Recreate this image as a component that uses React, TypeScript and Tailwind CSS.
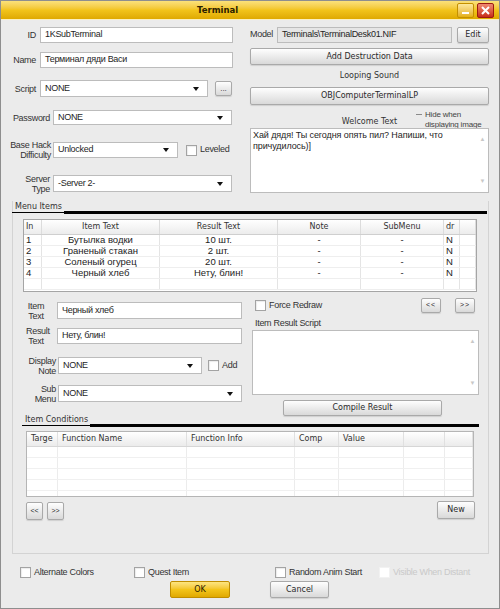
import React from "react";

const ui = "font-['Liberation_Sans',Arial,sans-serif]";
const dv = "font-['DejaVu_Sans',Verdana,sans-serif]";
const txt = "text-[9px] tracking-[-0.3px]";

type Kids = { className?: string; children?: React.ReactNode };

const Arrow = () => (
    <span className="ml-auto mr-[4px] h-0 w-0 shrink-0 border-x-[3px] border-t-[4px] border-x-transparent border-t-[#111]" />
);

function Field({ className = "", children, gray }: Kids & { gray?: boolean }) {
    return (
        <div
            className={`flex shrink-0 items-center overflow-hidden whitespace-nowrap border border-[#bcbcbc] px-[4px] ${txt} text-[#1e1e1e] ${
                gray ? "bg-[#e6e6e6]" : "bg-white"
            } ${className}`}
        >
            {children}
        </div>
    );
}

function Combo({ className = "", children }: Kids) {
    return (
        <Field className={className}>
            <span>{children}</span>
            <Arrow />
        </Field>
    );
}

function Btn({ className = "", children }: Kids) {
    return (
        <div
            className={`flex shrink-0 items-center justify-center rounded-[2px] border border-[#a9a9a9] bg-linear-to-b from-[#fefefe] to-[#d9d9d9] text-[#2a2a2a] shadow-[0_1px_1px_rgba(0,0,0,0.12)] ${className}`}
        >
            {children}
        </div>
    );
}

function Check({ label, disabled, className = "" }: { label: string; disabled?: boolean; className?: string }) {
    return (
        <div className={`flex items-center gap-[3px] ${txt} ${disabled ? "text-[#c9c9c9]" : "text-[#333]"} ${className}`}>
            <span
                className={`h-[11px] w-[11px] shrink-0 border bg-white ${
                    disabled ? "border-[#f2f2f2]" : "border-[#a3a3a3] shadow-[inset_1px_1px_1px_rgba(0,0,0,0.08)]"
                }`}
            />
            {label}
        </div>
    );
}

function Lbl({ className = "", children }: Kids) {
    return <div className={`shrink-0 text-right ${txt} leading-[10px] text-[#333] ${className}`}>{children}</div>;
}

function Section({ title, className = "" }: { title: string; className?: string }) {
    return (
        <div className={`flex items-end ${className}`}>
            <span className={`border-b border-black pl-[3px] pr-[2px] text-[8px] leading-[11px] text-[#333] ${dv}`}>{title}</span>
            <div className="mb-[-1px] h-[3px] flex-1 bg-black" />
        </div>
    );
}

const menuCols = [
    { w: "w-[18px]", t: "In", a: "text-left pl-[2px]" },
    { w: "w-[118px]", t: "Item Text", a: "text-center" },
    { w: "w-[118px]", t: "Result Text", a: "text-center" },
    { w: "w-[83px]", t: "Note", a: "text-center" },
    { w: "w-[83px]", t: "SubMenu", a: "text-center" },
    { w: "w-[16px]", t: "dr", a: "text-left pl-[2px]" },
    { w: "flex-1", t: "", a: "" },
];

const menuRows = [
    ["1", "Бутылка водки", "10 шт.", "-", "-", "N", ""],
    ["2", "Граненый стакан", "2 шт.", "-", "-", "N", ""],
    ["3", "Соленый огурец", "20 шт.", "-", "-", "N", ""],
    ["4", "Черный хлеб", "Нету, блин!", "-", "-", "N", ""],
    ["", "", "", "", "", "", ""],
];

const condCols = [
    { w: "w-[31px]", t: "Targe" },
    { w: "w-[129px]", t: "Function Name" },
    { w: "w-[108px]", t: "Function Info" },
    { w: "w-[44px]", t: "Comp" },
    { w: "w-[65px]", t: "Value" },
    { w: "w-[41px]", t: "" },
    { w: "flex-1", t: "" },
];

const App: React.FC = () => {
    return (
        <div className={`flex h-[609px] w-[500px] flex-col overflow-hidden border border-[#8e8e8e] bg-[#ebebeb] ${ui}`}>
            {/* Title bar */}
            <div className="flex h-[19px] shrink-0 items-center border-b border-[#fbf0c0] bg-linear-to-b from-[#fbe17a] via-[#f2c41a] to-[#dfa900]">
                <span className={`ml-[196px] text-[8.5px] font-bold text-[#2a2000] ${dv}`}>Terminal</span>
                <div className="ml-auto mr-[5px] flex gap-[3px]">
                    <div className="flex h-[15px] w-[17px] items-end justify-center rounded-[2px] border border-[#c49000] bg-linear-to-b from-[#fde89a] to-[#e4b000] pb-[3px]">
                        <span className="h-[2px] w-[7px] bg-white" />
                    </div>
                    <div className="flex h-[15px] w-[17px] items-center justify-center rounded-[2px] border border-[#9c1a10] bg-linear-to-b from-[#f08a70] to-[#c72a18]">
                        <svg width="9" height="9" viewBox="0 0 9 9">
                            <path d="M1 1 L8 8 M8 1 L1 8" stroke="#fff" strokeWidth="2" />
                        </svg>
                    </div>
                </div>
            </div>

            {/* Top area */}
            <div className="flex h-[174px] shrink-0">
                <div className="flex w-[248px] shrink-0 flex-col">
                    <div className="mt-[7px] flex h-[16px] items-center">
                        <Lbl className="w-[35px]">ID</Lbl>
                        <Field className="ml-[4px] h-[16px] w-[193px]">1KSubTerminal</Field>
                    </div>
                    <div className="mt-[9px] flex h-[16px] items-center">
                        <Lbl className="w-[35px]">Name</Lbl>
                        <Field className="ml-[4px] h-[16px] w-[193px]">Терминал дяди Васи</Field>
                    </div>
                    <div className="mt-[12px] flex h-[17px] items-center">
                        <Lbl className="w-[35px]">Script</Lbl>
                        <Combo className="ml-[4px] h-[17px] w-[168px]">NONE</Combo>
                        <Btn className="ml-[7px] h-[15px] w-[17px] text-[8px] leading-[8px]">...</Btn>
                    </div>
                    <div className="mt-[13px] flex h-[15px] items-center">
                        <Lbl className="w-[49px]">Password</Lbl>
                        <Combo className="ml-[3px] h-[15px] w-[179px]">NONE</Combo>
                    </div>
                    <div className="mt-[17px] flex h-[16px] items-center">
                        <Lbl className="w-[50px]">
                            Base Hack
                            <br />
                            Difficulty
                        </Lbl>
                        <Combo className="ml-[2px] h-[16px] w-[125px]">Unlocked</Combo>
                        <Check className="ml-[8px]" label="Leveled" />
                    </div>
                    <div className="mt-[17px] flex h-[17px] items-center">
                        <Lbl className="w-[49px]">
                            Server
                            <br />
                            Type
                        </Lbl>
                        <Combo className="ml-[3px] h-[17px] w-[179px]">-Server 2-</Combo>
                    </div>
                </div>

                <div className="ml-[1px] flex w-[239px] shrink-0 flex-col">
                    <div className="mt-[7px] flex h-[16px] items-center">
                        <span className={`${txt} text-[#333]`}>Model</span>
                        <Field gray className="ml-[4px] h-[16px] w-[175px]">
                            Terminals\TerminalDesk01.NIF
                        </Field>
                        <Btn className={`ml-auto h-[16px] w-[32px] text-[8px] ${dv}`}>Edit</Btn>
                    </div>
                    <Btn className={`mt-[5px] h-[17px] w-full text-[8px] ${dv}`}>Add Destruction Data</Btn>
                    <div className={`flex h-[22px] items-center justify-center text-[8px] text-[#333] ${dv}`}>Looping Sound</div>
                    <Btn className={`h-[18px] w-full text-[8px] ${dv}`}>OBJComputerTerminalLP</Btn>
                    <div className="relative h-[23px]">
                        <div className={`absolute left-0 right-0 top-[11px] text-center text-[8px] leading-[11px] text-[#333] ${dv}`}>
                            Welcome Text
                        </div>
                        <div className="absolute left-[166px] top-[5px] flex items-start gap-[3px]">
                            <span className="mt-[4px] h-[1px] w-[6px] bg-[#8a8a8a]" />
                            <span className="text-[8px] leading-[10px] tracking-[-0.2px] text-[#444]">
                                Hide when
                                <br />
                                displaying image
                            </span>
                        </div>
                    </div>
                    <div className="relative z-10 flex h-[65px] border border-[#bcbcbc] bg-white">
                        <div className="flex-1 px-[2px] pt-[1px] text-[9px] leading-[11px] tracking-[-0.1px] text-[#1e1e1e]">
                            Хай дядя! Ты сегодня опять пил? Напиши, что причудилось)]
                        </div>
                        <div className="flex w-[11px] flex-col items-center justify-between py-[6px] text-[6px] text-[#c8c8c8]">
                            <span>▲</span>
                            <span>▼</span>
                        </div>
                    </div>
                </div>
            </div>

            {/* Group frame */}
            <div className="ml-[11px] mt-[7px] flex h-[353px] w-[477px] shrink-0 flex-col border-b border-l border-r border-[#d3d3d3]">
                <Section title="Menu Items" className="-ml-[1px] mr-[1px]" />

                {/* Menu list */}
                <div className="ml-[10px] mt-[6px] flex h-[73px] w-[454px] shrink-0 flex-col overflow-hidden border border-[#a5a5a5] bg-white">
                    <div className={`flex h-[15px] shrink-0 border-b border-[#cfcfcf] bg-linear-to-b from-[#ffffff] to-[#ececec] text-[8px] text-[#333] ${dv}`}>
                        {menuCols.map((c, i) => (
                            <div key={i} className={`${c.w} ${c.a} overflow-hidden whitespace-nowrap border-r border-[#dcdcdc] leading-[14px]`}>
                                {c.t}
                            </div>
                        ))}
                    </div>
                    {menuRows.map((r, ri) => (
                        <div key={ri} className="flex h-[11px] shrink-0 border-b border-[#eeeeee] text-[9.5px] leading-[10px] text-[#222]">
                            {r.map((v, ci) => (
                                <div
                                    key={ci}
                                    className={`${menuCols[ci].w} ${menuCols[ci].a} overflow-hidden whitespace-nowrap border-r border-[#e4e4e4]`}
                                >
                                    {v}
                                </div>
                            ))}
                        </div>
                    ))}
                </div>

                {/* Item editing */}
                <div className="mt-[6px] flex h-[118px] shrink-0">
                    <div className="flex w-[230px] shrink-0 flex-col">
                        <div className="mt-[4px] flex h-[17px] items-center">
                            <Lbl className="ml-[13px] w-[20px] !text-center">
                                Item
                                <br />
                                Text
                            </Lbl>
                            <Field className="ml-[11px] h-[17px] w-[185px]">Черный хлеб</Field>
                        </div>
                        <div className="mt-[9px] flex h-[16px] items-center">
                            <Lbl className="ml-[13px] w-[20px] !text-center">
                                Result
                                <br />
                                Text
                            </Lbl>
                            <Field className="ml-[11px] h-[16px] w-[185px]">Нету, блин!</Field>
                        </div>
                        <div className="mt-[13px] flex h-[17px] items-center">
                            <Lbl className="ml-[6px] w-[37px]">
                                Display
                                <br />
                                Note
                            </Lbl>
                            <Combo className="ml-[2px] h-[17px] w-[144px]">NONE</Combo>
                            <Check className="ml-[6px]" label="Add" />
                        </div>
                        <div className="mt-[11px] flex h-[17px] items-center">
                            <Lbl className="ml-[6px] w-[37px]">
                                Sub
                                <br />
                                Menu
                            </Lbl>
                            <Combo className="ml-[2px] h-[17px] w-[184px]">NONE</Combo>
                        </div>
                    </div>

                    <div className="ml-[9px] flex w-[227px] shrink-0 flex-col">
                        <div className="flex h-[15px] items-center">
                            <Check className="ml-[3px]" label="Force Redraw" />
                            <Btn className="ml-auto h-[15px] w-[20px] text-[7px] tracking-[1px]">&lt;&lt;</Btn>
                            <Btn className="ml-[14px] mr-[4px] h-[15px] w-[20px] text-[7px] tracking-[1px]">&gt;&gt;</Btn>
                        </div>
                        <div className={`ml-[3px] mt-[5px] ${txt} leading-[11px] text-[#333]`}>Item Result Script</div>
                        <div className="mt-[1px] flex h-[65px] shrink-0 border border-[#bcbcbc] bg-white">
                            <div className="flex-1" />
                            <div className="flex w-[11px] flex-col items-center justify-between py-[6px] text-[6px] text-[#c8c8c8]">
                                <span>▲</span>
                                <span>▼</span>
                            </div>
                        </div>
                        <Btn className={`ml-[31px] mt-[5px] h-[16px] w-[159px] text-[8px] ${dv}`}>Compile Result</Btn>
                    </div>
                </div>

                {/* Item conditions */}
                <Section title="Item Conditions" className="ml-[9px] mr-[9px] mt-[-2px]" />
                <div className="ml-[13px] mt-[5px] flex h-[66px] w-[448px] shrink-0 flex-col overflow-hidden border border-[#b5b5b5] bg-white">
                    <div className={`flex h-[15px] shrink-0 border-b border-[#d6d6d6] bg-linear-to-b from-[#ffffff] to-[#ebebeb] text-[8px] text-[#333] ${dv}`}>
                        {condCols.map((c, i) => (
                            <div key={i} className={`${c.w} overflow-hidden whitespace-nowrap border-r border-[#e0e0e0] pl-[4px] leading-[14px]`}>
                                {c.t}
                            </div>
                        ))}
                    </div>
                    {[0, 1, 2, 3, 4].map((r) => (
                        <div key={r} className="flex h-[11px] shrink-0 border-b border-[#f0f0f0]">
                            {condCols.map((c, i) => (
                                <div key={i} className={`${c.w} border-r border-[#ececec]`} />
                            ))}
                        </div>
                    ))}
                </div>
                <div className="ml-[13px] mt-[4px] flex w-[449px] items-start">
                    <Btn className="mt-[1px] h-[18px] w-[17px] text-[7px]">&lt;&lt;</Btn>
                    <Btn className="ml-[4px] mt-[1px] h-[18px] w-[17px] text-[7px]">&gt;&gt;</Btn>
                    <Btn className={`ml-auto h-[18px] w-[38px] text-[8px] ${dv}`}>New</Btn>
                </div>
            </div>

            {/* Bottom options */}
            <div className="mt-[13px] flex h-[11px] shrink-0 items-center">
                <Check className="ml-[19px] w-[114px]" label="Alternate Colors" />
                <Check className="w-[141px]" label="Quest Item" />
                <Check className="w-[104px]" label="Random Anim Start" />
                <Check disabled label="Visible When Distant" />
            </div>
            <div className="mt-[3px] flex">
                <div
                    className={`ml-[169px] flex h-[17px] w-[60px] items-center justify-center rounded-[2px] border border-[#c08d00] bg-linear-to-b from-[#fde57e] via-[#f3c41a] to-[#e0a900] text-[8px] text-[#2a2000] ${dv}`}
                >
                    OK
                </div>
                <Btn className={`ml-[40px] h-[17px] w-[59px] text-[8px] ${dv}`}>Cancel</Btn>
            </div>
        </div>
    );
};

export default App;
